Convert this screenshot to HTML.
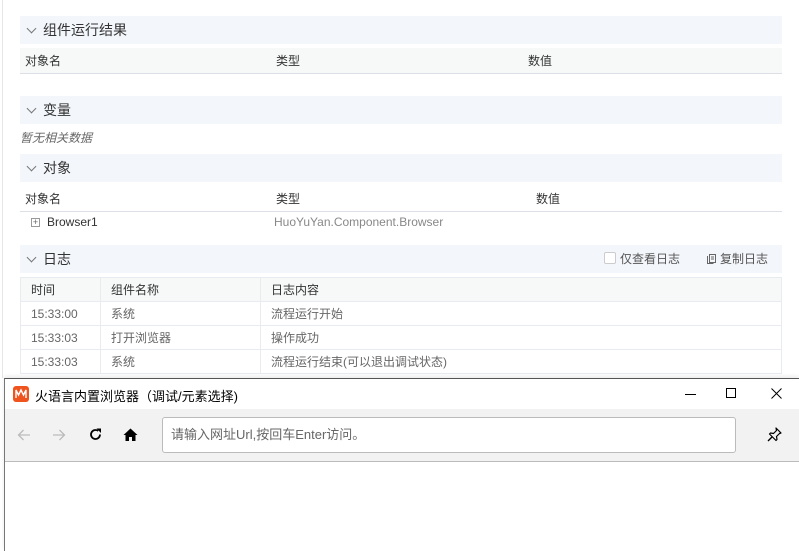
<!DOCTYPE html><html><head><meta charset="utf-8"><style>
*{margin:0;padding:0;box-sizing:border-box}
body{width:799px;height:551px;overflow:hidden;background:#fff;font-family:"Liberation Sans","Noto Sans CJK SC",sans-serif;font-size:12px;color:#333;position:relative}
.a{position:absolute}
.hd{position:absolute;left:20px;width:762px;height:28px;background:#f3f6fb;font-size:14px;color:#333;line-height:28px;padding-left:23px}
.hd:before{content:"";position:absolute;left:8px;top:9px;width:6px;height:6px;border-right:1px solid #777;border-bottom:1px solid #777;transform:rotate(45deg)}
.th{position:absolute;left:20px;width:762px;height:26px;background:#f7f9f9;border-bottom:1px solid #dcdfe6;line-height:26px}
.th span{position:absolute}
.g{color:#888}
table{border-collapse:collapse;position:absolute;left:20px;top:277px;width:762px}
td{border:1px solid #e8ebef;height:24px;padding-left:10px;color:#666}
tr.h td{background:#f7f9f9;color:#333}
</style></head><body>
<div class="a" style="left:2px;top:0;width:1px;height:378px;background:#e6e6e6"></div>
<div class="hd" style="top:16px">组件运行结果</div>
<div class="th" style="top:48px"><span style="left:5px">对象名</span><span style="left:256px">类型</span><span style="left:508px">数值</span></div>
<div class="hd" style="top:96px">变量</div>
<div class="a" style="left:20px;top:129px;font-style:italic;color:#666">暂无相关数据</div>
<div class="hd" style="top:154px">对象</div>
<div class="th" style="top:186px;background:#fff"><span style="left:5px">对象名</span><span style="left:256px">类型</span><span style="left:516px">数值</span></div>
<div class="a" style="left:31px;top:218px;width:9px;height:9px;border:1px solid #999;font-size:9px;line-height:7px;text-align:center;color:#666">+</div>
<div class="a" style="left:47px;top:215px">Browser1</div>
<div class="a g" style="left:274px;top:215px">HuoYuYan.Component.Browser</div>
<div class="hd" style="top:245px">日志
<span style="position:absolute;left:584px;top:7px;width:12px;height:12px;border:1px solid #ccc;background:#fff;border-radius:2px"></span>
<span style="position:absolute;left:600px;font-size:12px;color:#555">仅查看日志</span>
<svg style="position:absolute;left:686px;top:8px" width="11" height="12" viewBox="0 0 11 12"><path d="M3.5 1.5h6v8h-6z M1.5 3v7.5h6" fill="none" stroke="#666"/><path d="M5 4h3M5 6h3" stroke="#666"/></svg>
<span style="position:absolute;left:700px;font-size:12px;color:#555">复制日志</span></div>
<table><tr class="h"><td style="width:80px">时间</td><td style="width:160px">组件名称</td><td>日志内容</td></tr>
<tr><td>15:33:00</td><td>系统</td><td>流程运行开始</td></tr>
<tr><td>15:33:03</td><td>打开浏览器</td><td>操作成功</td></tr>
<tr><td>15:33:03</td><td>系统</td><td>流程运行结束(可以退出调试状态)</td></tr></table>
<div class="a" style="left:4px;top:378px;width:795px;height:173px;background:#fff;border-top:1px solid #555;border-left:1px solid #777;box-shadow:0 -2px 4px rgba(0,0,0,.08)">
<svg class="a" style="left:8px;top:7px" width="16" height="16" viewBox="0 0 16 16"><rect width="16" height="16" rx="3" fill="#f0541e"/><path d="M3 12V4l2.5 5L8 4l2.5 5L13 4v8" fill="none" stroke="#fff" stroke-width="1.4"/></svg>
<div class="a" style="left:30px;top:7px;font-size:13px;color:#000">火语言内置浏览器（调试/元素选择)</div>
<div class="a" style="left:680px;top:15px;width:11px;height:1px;background:#000"></div>
<div class="a" style="left:721px;top:9px;width:10px;height:10px;border:1px solid #000"></div>
<svg class="a" style="left:766px;top:9px" width="11" height="11" viewBox="0 0 11 11"><path d="M0.5 0.5l10 10M10.5 0.5l-10 10" stroke="#000"/></svg>
<div class="a" style="left:0;top:30px;width:795px;height:53px;background:#f2f2f2;border-bottom:1px solid #bbb">
<svg class="a" style="left:12px;top:20px" width="14" height="12" viewBox="0 0 14 12"><path d="M13 6H1.5M6.5 1L1.5 6l5 5" fill="none" stroke="#bbb" stroke-width="1.3"/></svg>
<svg class="a" style="left:47px;top:20px" width="14" height="12" viewBox="0 0 14 12"><path d="M1 6h11.5M7.5 1l5 5-5 5" fill="none" stroke="#bbb" stroke-width="1.3"/></svg>
<svg class="a" style="left:84px;top:19px" width="13" height="13" viewBox="0 0 13 13"><path d="M11 6.5A4.5 4.5 0 1 1 9.2 2.9" fill="none" stroke="#000" stroke-width="1.8"/><path d="M7.5 0.5h4.5v4.5z" fill="#000"/></svg>
<svg class="a" style="left:118px;top:19px" width="15" height="13" viewBox="0 0 15 13"><path d="M7.5 0.5L0.5 7h2v6h3.5V9h3v4h3.5V7h2z" fill="#000"/></svg>
<div class="a" style="left:157px;top:8px;width:574px;height:36px;background:#fff;border:1px solid #bbb;border-radius:3px;padding-left:8px;line-height:34px;font-size:13px;color:#666">请输入网址Url,按回车Enter访问。</div>
<svg class="a" style="left:762px;top:18px" width="15" height="15" viewBox="0 0 15 15"><path d="M9 1l5 5-1.5.5-3 3 .5 3-1 1-6.5-6.5 1-1 3 .5 3-3z" fill="none" stroke="#000" stroke-width="1.2" stroke-linejoin="round"/><path d="M5 10l-4 4" stroke="#000" stroke-width="1.3"/></svg>
</div></div>
</body></html>
